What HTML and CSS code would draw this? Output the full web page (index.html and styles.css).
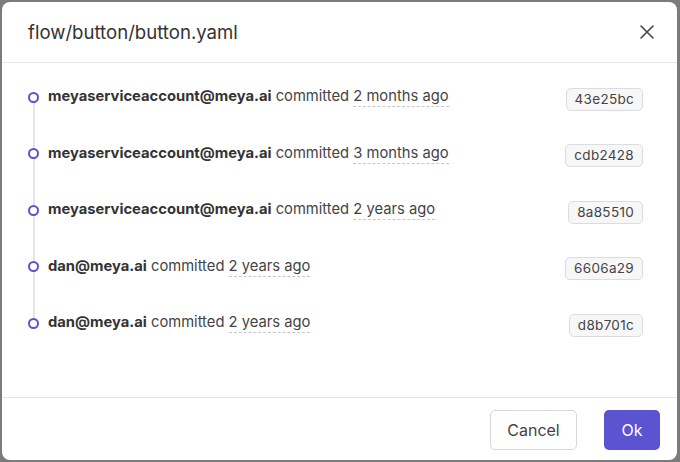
FILE: index.html
```html
<!DOCTYPE html>
<html>
<head>
<meta charset="utf-8">
<link rel="stylesheet" href="styles.css">
</head>
<body>
<div class="modal">
  <div class="header">
    <div class="title">flow/button/button.yaml</div>
    <svg class="close" width="16" height="16" viewBox="0 0 16 16"><path d="M2 2L14 14M14 2L2 14" stroke="#444" stroke-width="1.6" stroke-linecap="round"/></svg>
  </div>
  <div class="body">
    <ul class="timeline">
      <li class="row"><span class="dot"></span><span class="text"><b>meyaserviceaccount@meya.ai</b> committed <span class="ago">2 months ago</span></span><span class="hash">43e25bc</span></li>
      <li class="row"><span class="dot"></span><span class="text"><b>meyaserviceaccount@meya.ai</b> committed <span class="ago">3 months ago</span></span><span class="hash">cdb2428</span></li>
      <li class="row"><span class="dot"></span><span class="text"><b>meyaserviceaccount@meya.ai</b> committed <span class="ago">2 years ago</span></span><span class="hash">8a85510</span></li>
      <li class="row"><span class="dot"></span><span class="text"><b>dan@meya.ai</b> committed <span class="ago">2 years ago</span></span><span class="hash">6606a29</span></li>
      <li class="row"><span class="dot"></span><span class="text"><b>dan@meya.ai</b> committed <span class="ago">2 years ago</span></span><span class="hash">d8b701c</span></li>
    </ul>
  </div>
  <div class="footer">
    <button class="btn cancel">Cancel</button>
    <button class="btn ok">Ok</button>
  </div>
</div>
</body>
</html>
```
FILE: styles.css
```css
* { box-sizing: border-box; }
html, body { margin: 0; padding: 0; }
body {
  width: 680px;
  height: 462px;
  background: #7b7b7d;
  padding: 2px 3px 2px 2px;
  font-family: Inter, "Noto Sans", sans-serif;
  color: #333;
  overflow: hidden;
}
.modal {
  width: 675px;
  height: 458px;
  background: #fff;
  border-radius: 8px;
  display: flex;
  flex-direction: column;
}
.header {
  height: 61px;
  flex: none;
  display: flex;
  align-items: center;
  justify-content: space-between;
  padding: 0 22px 0 26px;
  border-bottom: 1px solid #e6e6e8;
}
.title {
  font-size: 18.6px;
  color: #333;
}
.close { display: block; }
.body {
  flex: 1;
  padding-top: 6px;
}
.timeline {
  list-style: none;
  margin: 0;
  padding: 0;
  position: relative;
}
.timeline::before {
  content: "";
  position: absolute;
  left: 31px;
  top: 28px;
  bottom: 28px;
  width: 2px;
  background: #e4e4ea;
}
.row {
  height: 56.5px;
  display: flex;
  align-items: center;
  padding: 0 34px 0 26px;
  position: relative;
}
.dot {
  width: 11px;
  height: 11px;
  border: 2.2px solid #5a54c8;
  border-radius: 50%;
  background: #fff;
  flex: none;
  margin-right: 9px;
  position: relative;
}
.text {
  flex: 1;
  font-size: 14.75px;
  color: #444;
  margin-top: -2px;
}
.text b { color: #333; font-weight: 700; }
.ago {
  border-bottom: 1px dashed #c8c8cc;
  padding-bottom: 1px;
}
.hash {
  font-size: 13.5px;
  color: #444;
  background: #f7f7f8;
  border: 1px solid #dcdcdf;
  border-radius: 5px;
  height: 23px;
  line-height: 21px;
  padding: 0 8px;
  margin-top: 4px;
  letter-spacing: 0.3px;
}
.footer {
  height: 63px;
  flex: none;
  border-top: 1px solid #e6e6e8;
  display: flex;
  justify-content: flex-end;
  align-items: flex-start;
  gap: 27px;
  padding: 12px 17px 0 0;
}
.btn {
  height: 40px;
  border-radius: 5px;
  font-family: Inter, "Noto Sans", sans-serif;
  font-size: 16px;
  cursor: pointer;
}
.cancel {
  width: 87px;
  background: #fff;
  border: 1px solid #d8d8dc;
  color: #444;
}
.ok {
  width: 56px;
  background: #5b54d1;
  border: none;
  color: #fff;
}
```
